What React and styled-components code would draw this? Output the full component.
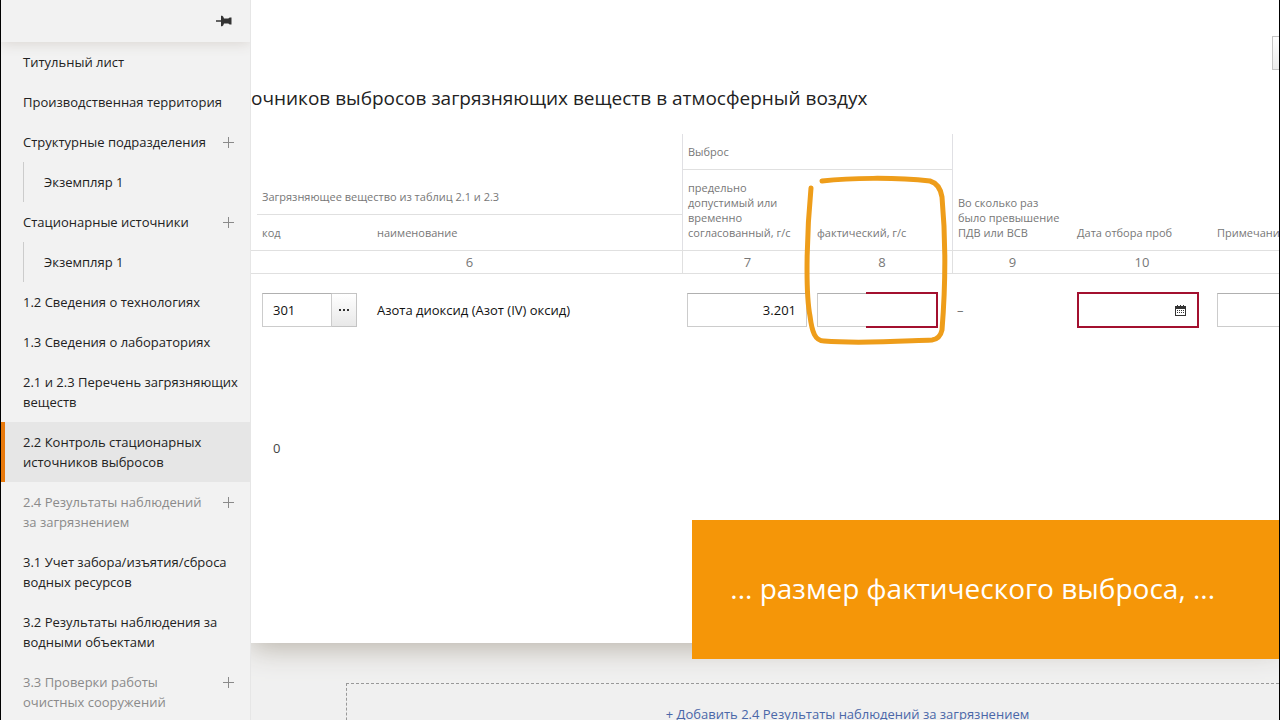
import styled, { createGlobalStyle } from "styled-components";

const menu = [
  { text: "Титульный лист" },
  { text: "Производственная территория" },
  { text: "Структурные подразделения", add: true },
  { text: "Экземпляр 1", nested: true },
  { text: "Стационарные источники", add: true },
  { text: "Экземпляр 1", nested: true },
  { text: "1.2 Сведения о технологиях" },
  { text: "1.3 Сведения о лабораториях" },
  { text: "2.1 и 2.3 Перечень загрязняющих\nвеществ" },
  { text: "2.2 Контроль стационарных\nисточников выбросов", active: true },
  { text: "2.4 Результаты наблюдений\nза загрязнением", add: true, muted: true },
  { text: "3.1 Учет забора/изъятия/сброса\nводных ресурсов" },
  { text: "3.2 Результаты наблюдения за\nводными объектами" },
  { text: "3.3 Проверки работы\nочистных сооружений", add: true, muted: true },
];

const Pin = () => (
  <svg width="16" height="12" viewBox="0 0 16 12" fill="#333">
    <path d="M0 5.3h5V.8h1.2Q7.500 1.500 8 3.500h4.300l1.400-1h1.800v7h-1.800l-1.400-1H8Q7.500 10.500 6.200 11.200H5V6.700H0z" />
  </svg>
);

const Plus = () => (
  <svg width="11" height="11" viewBox="0 0 11 11" stroke="#8a8a8a">
    <path d="M5.500 0v11M0 5.500h11" />
  </svg>
);

const Calendar = () => (
  <svg width="11" height="11" viewBox="0 0 11 11">
    <path d="M0 1h2V0h1v1h2V0h1v1h2V0h1v1h2v10H0z" fill="#333" />
    <path d="M1 4h9v6H1z" fill="#fff" />
    <path d="M2 5.500h7M2 7.500h7" stroke="#333" strokeDasharray="1 1" />
  </svg>
);

const Marker = () => (
  <MarkerStyled viewBox="0 0 150 180" aria-hidden="true">
    <path d="M11 18C7 60 5 120 10 146C12 162 15 171 24 171C60 174 102 171 132 170Q140 169 142 160C146 110 145 60 142 27Q140 14 130 11C94 7 50 8 22 11" />
  </MarkerStyled>
);

const Sidebar = () => (
  <SidebarStyled>
    <SidebarHead>
      <IconButton aria-label="Закрепить">
        <Pin />
      </IconButton>
    </SidebarHead>
    <nav>
      {menu.map((item, i) => (
        <MenuItem key={i} $active={item.active}>
          <MenuLink href="#" $nested={item.nested} $muted={item.muted}>
            {item.text}
          </MenuLink>
          {item.add && (
            <IconButton aria-label="Добавить">
              <Plus />
            </IconButton>
          )}
        </MenuItem>
      ))}
    </nav>
  </SidebarStyled>
);

const SourcesTable = () => (
  <Table>
    <colgroup>
      <Col $w={6} />
      <Col $w={115} />
      <Col />
      <Col $w={130} />
      <Col $w={140} />
      <Col $w={120} />
      <Col $w={140} />
      <Col $w={147} />
    </colgroup>
    <thead>
      <HeadRow $h={36}>
        <th rowSpan={3} />
        <Th colSpan={2} rowSpan={2} $line>
          Загрязняющее вещество из таблиц 2.1 и 2.3
        </Th>
        <Th colSpan={2} $line $divider>
          Выброс
        </Th>
        <Th rowSpan={3} $divider>
          Во сколько раз
          <br />
          было превышение
          <br />
          ПДВ или ВСВ
        </Th>
        <Th rowSpan={3}>Дата отбора проб</Th>
        <Th rowSpan={3}>Примечание</Th>
      </HeadRow>
      <HeadRow $h={45}>
        <Th rowSpan={2} $divider>
          предельно
          <br />
          допустимый или
          <br />
          временно
          <br />
          согласованный, г/с
        </Th>
        <Th rowSpan={2}>
          фактический, г/с
          <Marker />
        </Th>
      </HeadRow>
      <HeadRow $h={35}>
        <Th>код</Th>
        <Th>наименование</Th>
      </HeadRow>
      <HeadRow $h={24}>
        <NumTh />
        <NumTh colSpan={2}>6</NumTh>
        <NumTh $divider>7</NumTh>
        <NumTh>8</NumTh>
        <NumTh $divider>9</NumTh>
        <NumTh>10</NumTh>
        <NumTh />
      </HeadRow>
    </thead>
    <tbody>
      <tr>
        <td />
        <Td>
          <Picker>
            <Input aria-label="код" defaultValue="301" />
            <MoreButton aria-label="Выбрать">
              <i />
              <i />
              <i />
            </MoreButton>
          </Picker>
        </Td>
        <Td>Азота диоксид (Азот (IV) оксид)</Td>
        <Td>
          <Input aria-label="предельно допустимый" defaultValue="3.201" $right />
        </Td>
        <Td>
          <Required>
            <Input aria-label="фактический, г/с" />
          </Required>
        </Td>
        <Td>
          <Dash>–</Dash>
        </Td>
        <Td>
          <DateField>
            <input aria-label="Дата отбора проб" />
            <Calendar />
          </DateField>
        </Td>
        <Td>
          <Input aria-label="Примечание" />
        </Td>
      </tr>
    </tbody>
    <tfoot>
      <tr>
        <td />
        <TotalTd>0</TotalTd>
        <td colSpan={6} />
      </tr>
    </tfoot>
  </Table>
);

const App = () => {
  return (
    <AppStyled>
      <GlobalStyle />
      <Sidebar />
      <Main>
        <Sheet>
          <Toolbar>
            <ToolButton aria-label="Действия" />
          </Toolbar>
          <h1>очников выбросов загрязняющих веществ в атмосферный воздух</h1>
          <SourcesTable />
        </Sheet>
        <AddSection>
          <a href="#">+ Добавить 2.4 Результаты наблюдений за загрязнением</a>
        </AddSection>
      </Main>
      <Caption>... размер фактического выброса, ...</Caption>
    </AppStyled>
  );
};

const GlobalStyle = createGlobalStyle`
  * {
    box-sizing: border-box;
  }

  body {
    margin: 0;
    background: #000;
    color: #222;
    font: 13px/20px "Open Sans", "Noto Sans", sans-serif;
  }

  button, input {
    font: inherit;
    color: inherit;
  }
`;

const AppStyled = styled.div`
  position: relative;
  display: grid;
  grid-template-columns: 250px minmax(0, 1fr);
  height: 100vh;
  padding: 0 1px;
  overflow: hidden;
`;

const SidebarStyled = styled.aside`
  background: #f2f2f2;
  border-right: 1px solid #e6e6e6;
  overflow: hidden;
`;

const SidebarHead = styled.header`
  display: flex;
  align-items: center;
  justify-content: flex-end;
  height: 42px;
  padding-right: 18px;
  box-shadow: 0 1px 14px #d8d3cf;
`;

const IconButton = styled.button`
  display: flex;
  align-items: center;
  height: 20px;
  padding: 0;
  border: 0;
  background: none;
`;

const MenuItem = styled.div`
  display: flex;
  justify-content: space-between;
  padding: 0 16px 0 18px;
  border-left: 4px solid ${({ $active }) => ($active ? "#e8790c" : "transparent")};
  background: ${({ $active }) => ($active ? "#e6e6e6" : "none")};

  ${IconButton} {
    margin-top: 10px;
  }
`;

const MenuLink = styled.a`
  padding: 10px 0 10px ${({ $nested }) => ($nested ? "20px" : "0")};
  border-left: ${({ $nested }) => ($nested ? "1px solid #ccc" : "0")};
  color: ${({ $muted }) => ($muted ? "#8a8a8a" : "#222")};
  text-decoration: none;
  white-space: pre;
`;

const Main = styled.main`
  background: #f0f0f0;
  overflow: hidden;
`;

const Sheet = styled.section`
  min-height: 643px;
  background: #fff;
  box-shadow: 0 4px 28px #b5afa4;

  h1 {
    margin: 0;
    padding: 14px 0 22px;
    font-size: 19px;
    font-weight: 400;
    line-height: 28px;
    white-space: nowrap;
  }
`;

const Toolbar = styled.div`
  display: flex;
  justify-content: flex-end;
  padding-top: 36px;
`;

const ToolButton = styled.button`
  width: 34px;
  height: 34px;
  margin-right: -27px;
  border: 1px solid #c4c4c4;
  background: linear-gradient(#fff, #ececec);
`;

const Table = styled.table`
  width: calc(100% + 80px);
  table-layout: fixed;
  border-collapse: separate;
  border-spacing: 0;
`;

const Col = styled.col`
  width: ${({ $w }) => ($w ? `${$w}px` : "auto")};
`;

const HeadRow = styled.tr`
  height: ${({ $h }) => $h}px;
`;

const Th = styled.th`
  position: relative;
  padding: 10px 5px;
  border-bottom: ${({ $line }) => ($line ? "1px solid #e0e0e0" : "0")};
  border-left: ${({ $divider }) => ($divider ? "1px solid #e0e0e4" : "0")};
  color: #777;
  font-size: 11px;
  font-weight: 400;
  line-height: 15px;
  text-align: left;
  vertical-align: bottom;
  white-space: nowrap;
`;

const NumTh = styled.th`
  padding: 0;
  border: solid #e0e0e0;
  border-width: 1px 0 1px ${({ $divider }) => ($divider ? "1px" : "0")};
  color: #777;
  font-weight: 400;
`;

const Td = styled.td`
  height: 72px;
  padding: 0 5px;
  color: #111;
  white-space: nowrap;
`;

const TotalTd = styled.td`
  padding: 92px 16px 0;
  color: #444;
`;

const Input = styled.input`
  display: block;
  width: 100%;
  height: 34px;
  padding: 0 10px;
  border: 1px solid #ccc;
  border-top-color: #b0b0b0;
  border-radius: 0;
  background: #fff;
  color: #111;
  text-align: ${({ $right }) => ($right ? "right" : "left")};
`;

const Picker = styled.div`
  display: flex;
  margin-right: 10px;

  ${Input} {
    flex: 1;
    min-width: 0;
  }
`;

const MoreButton = styled.button`
  display: flex;
  align-items: center;
  justify-content: center;
  gap: 2px;
  width: 25px;
  height: 34px;
  padding: 0;
  border: 1px solid #c4c4c4;
  border-left: 0;
  background: linear-gradient(#fff, #e8e8e8);

  i {
    width: 2px;
    height: 2px;
    background: #333;
  }
`;

const Required = styled.div`
  position: relative;
  margin-right: 10px;

  &::after {
    content: "";
    position: absolute;
    inset: -1px -1px -1px 49px;
    border: 2px solid #a3102f;
    border-left: 0;
  }
`;

const Dash = styled.span`
  color: #777;
`;

const DateField = styled.div`
  display: flex;
  align-items: center;
  width: 122px;
  height: 36px;
  padding: 0 11px;
  border: 2px solid #a3102f;

  input {
    flex: 1;
    min-width: 0;
    border: 0;
    outline: 0;
    background: none;
  }
`;

const MarkerStyled = styled.svg`
  position: absolute;
  z-index: 1;
  top: 0;
  left: -12px;
  width: 150px;
  height: 180px;
  fill: none;
  stroke: #ee9d1a;
  stroke-width: 5px;
  stroke-linecap: round;
  stroke-linejoin: round;
  pointer-events: none;
`;

const AddSection = styled.div`
  margin: 40px -70px 0 95px;
  padding: 20px 0;
  border: 1px dashed #999;
  text-align: center;

  a {
    color: #4a67a8;
    text-decoration: none;
  }
`;

const Caption = styled.div`
  position: absolute;
  right: 1px;
  bottom: 61px;
  z-index: 2;
  padding: 48px 64px 51px 38px;
  background: #f59608;
  color: #fff;
  font-size: 28px;
  line-height: 40px;
  white-space: nowrap;
`;

export default App;
